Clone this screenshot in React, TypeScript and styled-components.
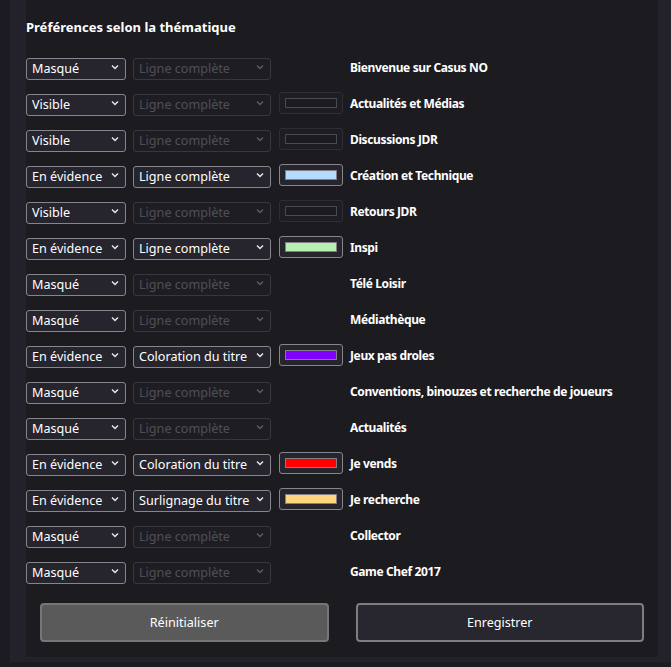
import React from 'react';
import styled, { createGlobalStyle } from 'styled-components';

const GlobalStyle = createGlobalStyle`
  html, body {
    margin: 0;
    padding: 0;
    background: #1c1b21;
  }
  body {
    font-family: "Noto Sans", "Open Sans", Arial, sans-serif;
    color: #fff;
  }
`;

type Mode = 'Masqué' | 'Visible' | 'En évidence';

interface Theme {
  mode: Mode;
  style: string;
  color?: string;
  label: string;
}

const THEMES: Theme[] = [
  { mode: 'Masqué', style: 'Ligne complète', label: 'Bienvenue sur Casus NO' },
  { mode: 'Visible', style: 'Ligne complète', label: 'Actualités et Médias' },
  { mode: 'Visible', style: 'Ligne complète', label: 'Discussions JDR' },
  { mode: 'En évidence', style: 'Ligne complète', color: '#b4daff', label: 'Création et Technique' },
  { mode: 'Visible', style: 'Ligne complète', label: 'Retours JDR' },
  { mode: 'En évidence', style: 'Ligne complète', color: '#b6efb1', label: 'Inspi' },
  { mode: 'Masqué', style: 'Ligne complète', label: 'Télé Loisir' },
  { mode: 'Masqué', style: 'Ligne complète', label: 'Médiathèque' },
  { mode: 'En évidence', style: 'Coloration du titre', color: '#8000ff', label: 'Jeux pas droles' },
  { mode: 'Masqué', style: 'Ligne complète', label: 'Conventions, binouzes et recherche de joueurs' },
  { mode: 'Masqué', style: 'Ligne complète', label: 'Actualités' },
  { mode: 'En évidence', style: 'Coloration du titre', color: '#ff0000', label: 'Je vends' },
  { mode: 'En évidence', style: 'Surlignage du titre', color: '#ffd580', label: 'Je recherche' },
  { mode: 'Masqué', style: 'Ligne complète', label: 'Collector' },
  { mode: 'Masqué', style: 'Ligne complète', label: 'Game Chef 2017' },
];

const MODES: Mode[] = ['Masqué', 'Visible', 'En évidence'];
const STYLES = ['Ligne complète', 'Coloration du titre', 'Surlignage du titre'];

const OuterPanel = styled.div`
  margin-left: 10px;
  background: #23222a;
  padding: 0 13px 5px 16px;
`;

const InnerPanel = styled.div`
  background: #1c1b20;
  padding: 18px 0 15px;
`;

const Title = styled.h3`
  margin: 0 0 20px;
  font-size: 13px;
  font-weight: 700;
  line-height: 18px;
  color: #fff;
`;

const Rows = styled.div`
  display: flex;
  flex-direction: column;
  gap: 14px;
`;

const Row = styled.div`
  display: flex;
  align-items: center;
  gap: 7px;
  height: 22px;
`;

const SelectWrap = styled.div<{ $width: number }>`
  position: relative;
  width: ${(p) => p.$width}px;
  height: 22px;
  flex: none;
`;

const NativeSelect = styled.select`
  appearance: none;
  -webkit-appearance: none;
  box-sizing: border-box;
  width: 100%;
  height: 100%;
  margin: 0;
  padding: 0 18px 0 5px;
  border: 1px solid #86858b;
  border-radius: 3px;
  background: #26252d;
  color: #fff;
  font-family: "Noto Sans", "Open Sans", Arial, sans-serif;
  font-size: 12.6px;
  outline: none;

  &:disabled {
    border-color: #45444b;
    background: #201f26;
    color: #66656c;
  }
`;

const Chevron = styled.svg<{ $dim: boolean }>`
  position: absolute;
  right: 7px;
  top: 8px;
  width: 8px;
  height: 6px;
  pointer-events: none;
  stroke: ${(p) => (p.$dim ? '#5c5b62' : '#e6e6e8')};
`;

const ColorBox = styled.div<{ $active: boolean }>`
  box-sizing: border-box;
  flex: none;
  width: 64px;
  height: 22px;
  margin-left: 1px;
  padding: 5px;
  border: 1px solid ${(p) => (p.$active ? '#86858b' : '#2f2e35')};
  border-radius: 3px;
  background: ${(p) => (p.$active ? '#26252d' : '#1e1d23')};
`;

const Swatch = styled.div<{ $color?: string }>`
  box-sizing: border-box;
  height: 10px;
  border: 1px solid ${(p) => (p.$color ? '#808080' : '#4a4950')};
  background: ${(p) => p.$color ?? '#1c1b20'};
`;

const BoxSpacer = styled.div`
  flex: none;
  width: 64px;
  margin-left: 1px;
`;

const Label = styled.span`
  font-size: 12px;
  font-weight: 700;
  letter-spacing: -0.38px;
  line-height: 20px;
  padding-top: 2px;
  color: #fff;
  white-space: nowrap;
`;

const Actions = styled.div`
  display: grid;
  grid-template-columns: 1fr 1fr;
  gap: 27px;
  padding: 0 14px;
  margin-top: 21px;
`;

const Button = styled.button<{ $variant: 'reset' | 'save' }>`
  height: 39px;
  border-radius: 4px;
  border: 2px solid ${(p) => (p.$variant === 'reset' ? '#767676' : '#7e7d84')};
  background: ${(p) => (p.$variant === 'reset' ? '#5a5a5a' : '#28272f')};
  color: #fff;
  font-family: "Noto Sans", "Open Sans", Arial, sans-serif;
  font-size: 12.6px;
  cursor: pointer;
`;

function Select({ width, value, options, disabled }: { width: number; value: string; options: string[]; disabled?: boolean }) {
  return (
    <SelectWrap $width={width}>
      <NativeSelect defaultValue={value} disabled={disabled}>
        {options.map((o) => (
          <option key={o} value={o}>
            {o}
          </option>
        ))}
      </NativeSelect>
      <Chevron $dim={!!disabled} viewBox="0 0 8 6" fill="none" strokeWidth="1.5">
        <path d="M1 1.5 L4 4.5 L7 1.5" />
      </Chevron>
    </SelectWrap>
  );
}

export default function App() {
  return (
    <>
      <GlobalStyle />
      <OuterPanel>
        <InnerPanel>
          <Title>Préférences selon la thématique</Title>
          <Rows>
            {THEMES.map((t) => {
              const highlighted = t.mode === 'En évidence';
              return (
                <Row key={t.label}>
                  <Select width={100} value={t.mode} options={MODES} />
                  <Select width={138} value={t.style} options={STYLES} disabled={!highlighted} />
                  {t.mode === 'Masqué' ? (
                    <BoxSpacer />
                  ) : (
                    <ColorBox $active={highlighted}>
                      <Swatch $color={t.color} />
                    </ColorBox>
                  )}
                  <Label>{t.label}</Label>
                </Row>
              );
            })}
          </Rows>
          <Actions>
            <Button $variant="reset">Réinitialiser</Button>
            <Button $variant="save">Enregistrer</Button>
          </Actions>
        </InnerPanel>
      </OuterPanel>
    </>
  );
}
